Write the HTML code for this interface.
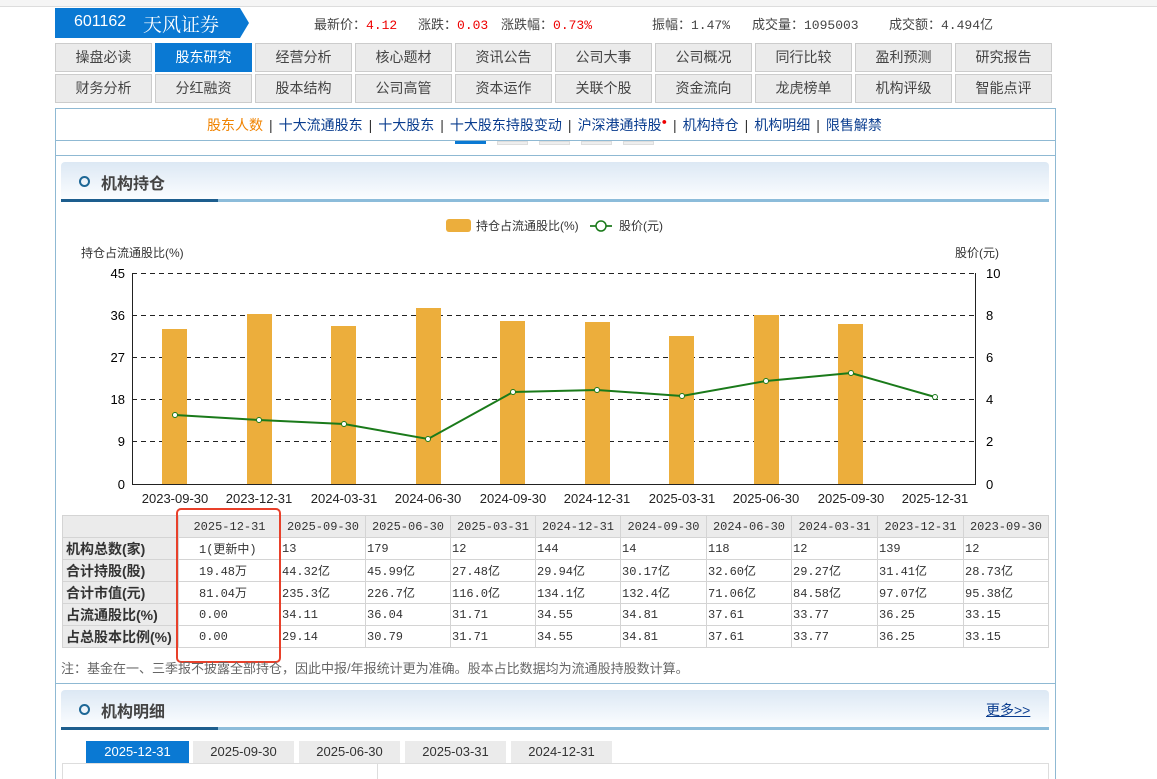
<!DOCTYPE html>
<html><head><meta charset="utf-8"><style>
*{margin:0;padding:0;box-sizing:border-box}
html,body{width:1157px;height:779px;overflow:hidden}
body{background:#fff;font-family:"Liberation Sans","Noto Sans CJK SC",sans-serif;font-size:14px;color:#333;position:relative}
.abs{position:absolute}
.btn{position:absolute;width:97px;height:29px;background:#ebebeb;border:1px solid #ccc;text-align:center;line-height:27px;font-size:14px;color:#444}
.btn.on{background:#0a79d3;color:#fff;border-color:#0a79d3}
.sh{position:absolute;left:61px;width:988px;height:40px;background:linear-gradient(#dce8f4,#fbfdff);border-bottom:3px solid #8cbcda;border-radius:4px 4px 0 0}
.sh .dk{position:absolute;left:0;bottom:-3px;width:157px;height:3px;background:#1d5e8e}
.sh .c{position:absolute;left:18px;top:14px;width:11px;height:11px;border:2px solid #1d6796;border-radius:50%}
.sh .t{position:absolute;left:40px;top:8px;font-size:16px;font-weight:bold;color:#444}
table{border-collapse:collapse;position:absolute;left:62px;top:515px;table-layout:fixed;width:986px;font-family:"Liberation Mono","Noto Sans CJK SC",monospace;font-size:12px}
td{border:1px solid #d4d4d4;height:22px;padding:0 1px;white-space:nowrap;overflow:hidden;color:#333}
tr:first-child td{background:#ebebeb;text-align:center}
td.l{background:#ebebeb;font-weight:bold;font-family:"Liberation Sans","Noto Sans CJK SC",sans-serif;font-size:14px;padding-left:3px}
.dt{position:absolute;top:741px;width:101px;height:22px;background:#ebebeb;text-align:center;line-height:22px;font-size:13px;color:#333}
.sp{color:#333;margin:0 6px}
</style></head><body>
<div class="abs" style="left:0;top:0;width:1157px;height:7px;background:#f5f5f5;border-bottom:1px solid #ddd"></div>
<div class="abs" style="left:55px;top:8px;width:185px;height:30px;background:#0a79d3"></div>
<div class="abs" style="left:240px;top:8px;width:0;height:0;border-top:15px solid transparent;border-bottom:15px solid transparent;border-left:9px solid #0a79d3"></div>
<div class="abs" style="left:74px;top:13px;color:#fff;font-size:16px">601162</div>
<div class="abs" style="left:143px;top:10px;color:#fff;font-size:19px;font-family:'Liberation Serif','Noto Serif CJK SC',serif">天风证券</div>
<div class="abs" style="top:14px;left:0;font-size:13px;color:#444;width:1157px;font-family:'Liberation Mono','Noto Sans CJK SC',monospace">
<span class="abs" style="left:314px">最新价：<span style="color:#e00">4.12</span></span>
<span class="abs" style="left:418px">涨跌：<span style="color:#e00">0.03</span></span>
<span class="abs" style="left:501px">涨跌幅：<span style="color:#e00">0.73%</span></span>
<span class="abs" style="left:652px">振幅：1.47%</span>
<span class="abs" style="left:752px">成交量：1095003</span>
<span class="abs" style="left:889px">成交额：4.494亿</span>
</div>
<div class="btn" style="left:55px;top:43px">操盘必读</div><div class="btn on" style="left:155px;top:43px">股东研究</div><div class="btn" style="left:255px;top:43px">经营分析</div><div class="btn" style="left:355px;top:43px">核心题材</div><div class="btn" style="left:455px;top:43px">资讯公告</div><div class="btn" style="left:555px;top:43px">公司大事</div><div class="btn" style="left:655px;top:43px">公司概况</div><div class="btn" style="left:755px;top:43px">同行比较</div><div class="btn" style="left:855px;top:43px">盈利预测</div><div class="btn" style="left:955px;top:43px">研究报告</div>
<div class="btn" style="left:55px;top:74px">财务分析</div><div class="btn" style="left:155px;top:74px">分红融资</div><div class="btn" style="left:255px;top:74px">股本结构</div><div class="btn" style="left:355px;top:74px">公司高管</div><div class="btn" style="left:455px;top:74px">资本运作</div><div class="btn" style="left:555px;top:74px">关联个股</div><div class="btn" style="left:655px;top:74px">资金流向</div><div class="btn" style="left:755px;top:74px">龙虎榜单</div><div class="btn" style="left:855px;top:74px">机构评级</div><div class="btn" style="left:955px;top:74px">智能点评</div>
<div class="abs" style="left:55px;top:108px;width:1001px;height:700px;border:1px solid #8fb9d3"></div>
<div class="abs" style="left:55px;top:140px;width:1001px;height:1px;background:#8fb9d3"></div>
<div class="abs" style="left:55px;top:155px;width:1001px;height:1px;background:#8fb9d3"></div>
<div class="abs" style="left:455px;top:141px;width:31px;height:3px;background:#0a79d3"></div>
<div class="abs" style="left:497px;top:141px;width:31px;height:4px;background:#eee;border:1px solid #ddd"></div>
<div class="abs" style="left:539px;top:141px;width:31px;height:4px;background:#eee;border:1px solid #ddd"></div>
<div class="abs" style="left:581px;top:141px;width:31px;height:4px;background:#eee;border:1px solid #ddd"></div>
<div class="abs" style="left:623px;top:141px;width:31px;height:4px;background:#eee;border:1px solid #ddd"></div>
<div class="abs" style="left:207px;top:115px;font-size:14px;color:#0a3d8f;white-space:nowrap"><span style="color:#f08300">股东人数</span><span class="sp">|</span>十大流通股东<span class="sp">|</span>十大股东<span class="sp">|</span>十大股东持股变动<span class="sp">|</span>沪深港通持股<sup style="color:#e00;font-size:9px">●</sup><span class="sp">|</span>机构持仓<span class="sp">|</span>机构明细<span class="sp">|</span>限售解禁</div>
<div class="sh" style="top:162px"><div class="dk"></div><div class="c"></div><div class="t">机构持仓</div></div>
<svg class="abs" style="left:0;top:0" width="1157" height="779" font-family="Liberation Sans,Noto Sans CJK SC,sans-serif" font-size="12">
<rect x="446" y="219" width="25" height="13" rx="3" fill="#ecae3c"/>
<text x="476" y="230" fill="#333">持仓占流通股比(%)</text>
<line x1="590" y1="226" x2="612" y2="226" stroke="#3a8a3a" stroke-width="2"/><circle cx="601" cy="226" r="5" fill="#fff" stroke="#1a7a1a" stroke-width="1.5"/>
<text x="619" y="230" fill="#333">股价(元)</text>
<text x="81" y="257" fill="#333">持仓占流通股比(%)</text>
<text x="955" y="257" fill="#333">股价(元)</text>
<g stroke="#222" stroke-dasharray="5,4"><line x1="132" y1="273.5" x2="975" y2="273.5"/><line x1="132" y1="315.5" x2="975" y2="315.5"/><line x1="132" y1="357.5" x2="975" y2="357.5"/><line x1="132" y1="399.5" x2="975" y2="399.5"/><line x1="132" y1="441.5" x2="975" y2="441.5"/></g>
<line x1="132.5" y1="273" x2="132.5" y2="485" stroke="#222"/><line x1="975.5" y1="273" x2="975.5" y2="485" stroke="#222"/><line x1="132" y1="484.5" x2="976" y2="484.5" stroke="#222"/>
<g text-anchor="end" font-size="13"><text x="125" y="278">45</text><text x="125" y="320">36</text><text x="125" y="362">27</text><text x="125" y="404">18</text><text x="125" y="446">9</text><text x="125" y="489">0</text></g>
<g font-size="13"><text x="986" y="278">10</text><text x="986" y="320">8</text><text x="986" y="362">6</text><text x="986" y="404">4</text><text x="986" y="446">2</text><text x="986" y="489">0</text></g>
<g fill="#ecae3c"><rect x="162" y="329" width="25" height="155"/><rect x="247" y="314" width="25" height="170"/><rect x="331" y="326" width="25" height="158"/><rect x="416" y="308" width="25" height="176"/><rect x="500" y="321" width="25" height="163"/><rect x="585" y="322" width="25" height="162"/><rect x="669" y="336" width="25" height="148"/><rect x="754" y="315" width="25" height="169"/><rect x="838" y="324" width="25" height="160"/></g>
<polyline points="175,415 259,420 344,424 428,439 513,392 597,390 682,396 766,381 851,373 935,397" fill="none" stroke="#1a7a1a" stroke-width="2"/>
<g fill="#fff" stroke="#1a7a1a" stroke-width="1"><circle cx="175" cy="415" r="2.5"/><circle cx="259" cy="420" r="2.5"/><circle cx="344" cy="424" r="2.5"/><circle cx="428" cy="439" r="2.5"/><circle cx="513" cy="392" r="2.5"/><circle cx="597" cy="390" r="2.5"/><circle cx="682" cy="396" r="2.5"/><circle cx="766" cy="381" r="2.5"/><circle cx="851" cy="373" r="2.5"/><circle cx="935" cy="397" r="2.5"/></g>
<g text-anchor="middle" font-size="13" fill="#222"><text x="175" y="503">2023-09-30</text><text x="259" y="503">2023-12-31</text><text x="344" y="503">2024-03-31</text><text x="428" y="503">2024-06-30</text><text x="513" y="503">2024-09-30</text><text x="597" y="503">2024-12-31</text><text x="682" y="503">2025-03-31</text><text x="766" y="503">2025-06-30</text><text x="851" y="503">2025-09-30</text><text x="935" y="503">2025-12-31</text></g>
</svg>
<table>
<colgroup><col style="width:116px"><col style="width:102px"><col style="width:85px"><col style="width:85px"><col style="width:85px"><col style="width:85px"><col style="width:86px"><col style="width:85px"><col style="width:86px"><col style="width:86px"><col style="width:85px"></colgroup>
<tr><td></td><td>2025-12-31</td><td>2025-09-30</td><td>2025-06-30</td><td>2025-03-31</td><td>2024-12-31</td><td>2024-09-30</td><td>2024-06-30</td><td>2024-03-31</td><td>2023-12-31</td><td>2023-09-30</td></tr>
<tr><td class="l">机构总数(家)</td><td style="padding-left:20px">1(更新中)</td><td>13</td><td>179</td><td>12</td><td>144</td><td>14</td><td>118</td><td>12</td><td>139</td><td>12</td></tr>
<tr><td class="l">合计持股(股)</td><td style="padding-left:20px">19.48万</td><td>44.32亿</td><td>45.99亿</td><td>27.48亿</td><td>29.94亿</td><td>30.17亿</td><td>32.60亿</td><td>29.27亿</td><td>31.41亿</td><td>28.73亿</td></tr>
<tr><td class="l">合计市值(元)</td><td style="padding-left:20px">81.04万</td><td>235.3亿</td><td>226.7亿</td><td>116.0亿</td><td>134.1亿</td><td>132.4亿</td><td>71.06亿</td><td>84.58亿</td><td>97.07亿</td><td>95.38亿</td></tr>
<tr><td class="l">占流通股比(%)</td><td style="padding-left:20px">0.00</td><td>34.11</td><td>36.04</td><td>31.71</td><td>34.55</td><td>34.81</td><td>37.61</td><td>33.77</td><td>36.25</td><td>33.15</td></tr>
<tr><td class="l">占总股本比例(%)</td><td style="padding-left:20px">0.00</td><td>29.14</td><td>30.79</td><td>31.71</td><td>34.55</td><td>34.81</td><td>37.61</td><td>33.77</td><td>36.25</td><td>33.15</td></tr>
</table>
<div class="abs" style="left:176px;top:508px;width:105px;height:155px;border:2.5px solid #e8402a;border-radius:5px"></div>
<div class="abs" style="left:61px;top:658px;font-size:13px;color:#666;white-space:nowrap">注：基金在一、三季报不披露全部持仓，因此中报/年报统计更为准确。股本占比数据均为流通股持股数计算。</div>
<div class="abs" style="left:55px;top:683px;width:1001px;height:1px;background:#8fb9d3"></div>
<div class="sh" style="top:690px"><div class="dk"></div><div class="c"></div><div class="t">机构明细</div></div>
<div class="abs" style="left:986px;top:700px;font-size:14px;color:#0a3d8f;text-decoration:underline">更多&gt;&gt;</div>
<div class="dt" style="left:86px;background:#0a79d3;color:#fff;width:103px">2025-12-31</div>
<div class="dt" style="left:193px">2025-09-30</div><div class="dt" style="left:299px">2025-06-30</div><div class="dt" style="left:405px">2025-03-31</div><div class="dt" style="left:511px">2024-12-31</div>
<div class="abs" style="left:62px;top:763px;width:987px;height:30px;border:1px solid #ddd"></div>
<div class="abs" style="left:377px;top:763px;width:1px;height:20px;background:#ddd"></div>
</body></html>
